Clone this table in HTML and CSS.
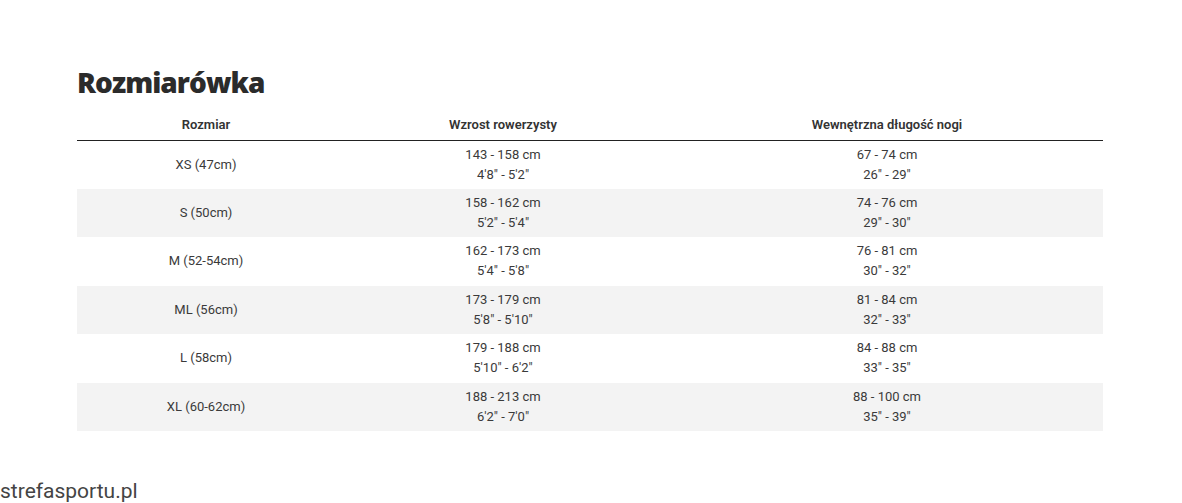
FILE: index.html
```html
<!DOCTYPE html>
<html lang="pl">
<head>
<meta charset="utf-8">
<link rel="stylesheet" href="styles.css">
</head>
<body>
<main class="page">
  <h1 class="title">Rozmiarówka</h1>
  <table class="sizes">
    <thead>
      <tr><th class="c1">Rozmiar</th><th class="c2">Wzrost rowerzysty</th><th class="c3">Wewnętrzna długość nogi</th></tr>
    </thead>
    <tbody>
      <tr><td>XS (47cm)</td><td>143 - 158 cm<br>4'8" - 5'2"</td><td>67 - 74 cm<br>26" - 29"</td></tr>
      <tr><td>S (50cm)</td><td>158 - 162 cm<br>5'2" - 5'4"</td><td>74 - 76 cm<br>29" - 30"</td></tr>
      <tr><td>M (52-54cm)</td><td>162 - 173 cm<br>5'4" - 5'8"</td><td>76 - 81 cm<br>30" - 32"</td></tr>
      <tr><td>ML (56cm)</td><td>173 - 179 cm<br>5'8" - 5'10"</td><td>81 - 84 cm<br>32" - 33"</td></tr>
      <tr><td>L (58cm)</td><td>179 - 188 cm<br>5'10" - 6'2"</td><td>84 - 88 cm<br>33" - 35"</td></tr>
      <tr><td>XL (60-62cm)</td><td>188 - 213 cm<br>6'2" - 7'0"</td><td>88 - 100 cm<br>35" - 39"</td></tr>
    </tbody>
  </table>
</main>
<footer class="brand">strefasportu.pl</footer>
</body>
</html>
```
FILE: styles.css
```css
html, body { margin: 0; padding: 0; background: #fff; }
body { width: 1182px; height: 503px; overflow: hidden; position: relative; font-family: Roboto, "Liberation Sans", sans-serif; color: #333; }
.page { padding: 64px 79px 0 77px; }
.title {
  margin: 0 0 12px 0;
  font-family: "Open Sans", "Noto Sans", sans-serif;
  font-weight: 800;
  font-size: 28px;
  line-height: 36px;
  letter-spacing: -0.95px;
  color: #2b2b2b;
}
.sizes { width: 1026px; border-collapse: collapse; table-layout: fixed; }
.sizes th {
  font-size: 13px; font-weight: 600; color: #333;
  height: 28px; padding: 5px 0 0 0; vertical-align: top; box-sizing: border-box;
  line-height: 16px;
  border-bottom: 1px solid #222;
}
.c1 { width: 258px; }
.c2 { width: 336px; }
.sizes td {
  text-align: center; font-size: 13px; line-height: 20px;
  height: 48.5px; padding: 4px 0 4px; box-sizing: border-box; color: #3a3a3a;
}
.sizes tbody tr:nth-child(even) td { background: #f3f3f3; }
.brand {
  position: absolute; left: 0; top: 478px;
  font-size: 21px; line-height: 26px; color: #444;
}
```
